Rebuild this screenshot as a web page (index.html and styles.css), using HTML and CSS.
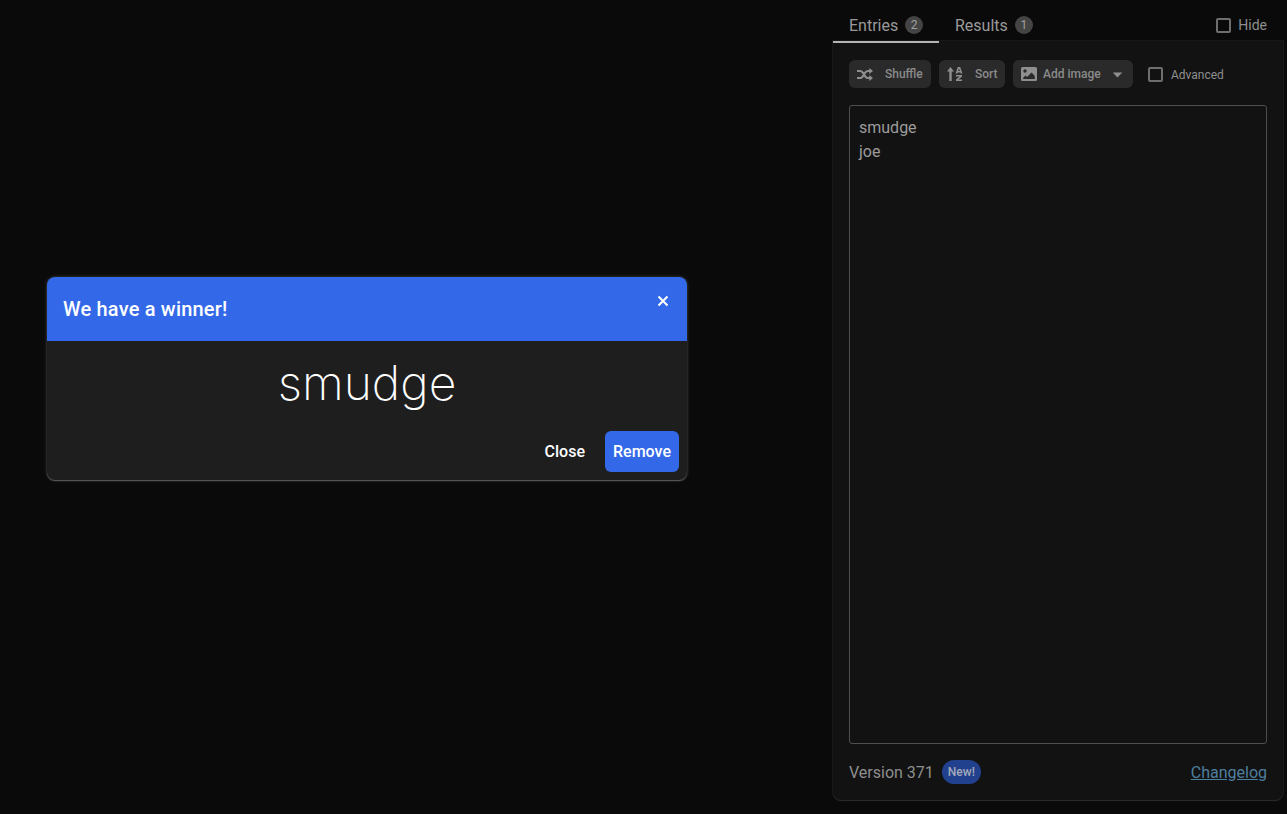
FILE: index.html
```html
<!DOCTYPE html>
<html lang="en">
<head>
<meta charset="utf-8">
<title>Wheel</title>
<link rel="stylesheet" href="styles.css">
</head>
<body>
<div class="page">
  <main class="stage">
    <section class="dialog">
      <header class="dialog-head">
        <h2 class="dialog-title">We have a winner!</h2>
        <svg class="dialog-x" viewBox="0 0 12 12"><path d="M1.5 1.5l9 9M10.5 1.5l-9 9"/></svg>
      </header>
      <div class="winner">smudge</div>
      <footer class="dialog-foot">
        <button class="btn-text">Close</button>
        <button class="btn-primary">Remove</button>
      </footer>
    </section>
  </main>
  <aside class="side">
    <div class="tabs">
      <div class="tab tab-active"><span>Entries</span><span class="count">2</span></div>
      <div class="tab"><span>Results</span><span class="count">1</span></div>
      <label class="hide"><span class="check"></span><span>Hide</span></label>
    </div>
    <div class="panel">
      <div class="toolbar">
        <button class="tool tool-shuffle">
          <svg class="ico-shuffle" viewBox="0 0 16 13"><path class="line" d="M0 3h3c1 0 2 .5 2.6 1.4l2.8 4.2C9 9.5 10 10 11 10h2M0 10h3c1 0 2-.5 2.6-1.4l2.8-4.2C9 3.5 10 3 11 3h2"/><path d="M12.3 0 16 3l-3.700 3zM12.300 7 16 10l-3.700 3z"/></svg>
          <span>Shuffle</span>
        </button>
        <button class="tool tool-sort">
          <svg class="ico-sort" viewBox="0 0 16 14"><path d="M3.500 0 7 4.500H4.700V14H2.300V4.500H0z"/><path fill-rule="evenodd" d="M8.600 6.400 10.800 0h2.400l2.200 6.400h-1.800l-.3-1h-2.600l-.3 1zM11.100 4h1.800L12 1.400zM9 8h6v1.500l-3.600 3H15V14H9v-1.500l3.600-3H9z"/></svg>
          <span>Sort</span>
        </button>
        <button class="tool tool-image">
          <svg class="ico-image" viewBox="0 0 16 14"><path fill-rule="evenodd" d="M1.500 0h13A1.500 1.500 0 0 1 16 1.500v11a1.500 1.500 0 0 1-1.500 1.500h-13A1.500 1.500 0 0 1 0 12.500v-11A1.500 1.500 0 0 1 1.500 0zM4 2.300a1.700 1.700 0 1 0 0 3.400 1.700 1.700 0 0 0 0-3.400zM2.200 12h11.600v-3L10.600 5.400 6 10 4.500 8.500 2.200 10.800z"/></svg>
          <span>Add image</span>
          <svg class="caret" viewBox="0 0 12 7"><path d="M0.500 0.500h11L6 6.500z"/></svg>
        </button>
        <label class="adv"><span class="check"></span><span>Advanced</span></label>
      </div>
      <div class="entries">smudge<br>joe</div>
      <div class="foot">
        <span>Version 371</span>
        <span class="badge">New!</span>
        <a class="log" href="#">Changelog</a>
      </div>
    </div>
  </aside>
</div>
</body>
</html>
```
FILE: styles.css
```css
* { box-sizing: border-box; }
html, body { margin: 0; height: 100%; }
body {
  background: #0a0a0a;
  font-family: Roboto, "Liberation Sans", sans-serif;
  color: #a0a0a0;
  overflow: hidden;
}
.page { display: flex; height: 814px; }
.stage {
  width: 734px;
  flex: none;
  display: flex;
  align-items: center;
  justify-content: center;
  padding-bottom: 57px;
}
.dialog {
  width: 640px;
  height: 203px;
  background: #1e1e1e;
  border-radius: 8px;
  overflow: hidden;
  display: flex;
  flex-direction: column;
  box-shadow: 0 1px 1px #5a5a5a, 0 0 3px 1px rgba(255,255,255,.13);
}
.dialog-head {
  height: 64px;
  flex: none;
  background: #3369e8;
  display: flex;
  align-items: flex-start;
  justify-content: space-between;
  padding: 20px 18px 0 16px;
}
.dialog-title { margin: 0; font-size: 20px; line-height: 24px; font-weight: 500; letter-spacing: .19px; color: #fff; }
.dialog-x { width: 12px; height: 12px; margin-top: -2px; stroke: #fff; stroke-width: 2; fill: none; }
.winner {
  text-align: center;
  font-family: Inter, sans-serif;
  font-weight: 200;
  font-size: 48px;
  line-height: 58px;
  padding-top: 13px;
  height: 90px;
  color: #fff;
}
.dialog-foot { display: flex; justify-content: flex-end; align-items: center; gap: 12px; padding-right: 8px; }
.btn-text, .btn-primary {
  border: 0;
  font: 500 16px/20px Roboto, sans-serif;
  color: #fff;
  border-radius: 6px;
  height: 41px;
}
.btn-text { background: none; padding: 0 8px; }
.btn-primary { background: #3369e8; padding: 0 8px; width: 74px; }
.side { width: 450px; margin-left: 99px; flex: none; display: flex; flex-direction: column; height: 800px; }
.tabs { height: 43px; flex: none; display: flex; padding-top: 12px; position: relative; z-index: 1; }
.tab {
  display: flex;
  align-items: flex-start;
  gap: 7px;
  height: 31px;
  padding: 4px 16px 0;
  font-size: 16px;
  line-height: 20px;
  color: #9a9a9a;
}
.tab-active { border-bottom: 2px solid #b4b4b4; width: 106px; }
.count {
  width: 18px; height: 18px; margin-top: 0;
  border-radius: 9px;
  background: #444;
  color: #a0a0a0;
  font-size: 12px;
  line-height: 18px;
  text-align: center;
}
.hide { margin-left: auto; margin-right: 16px; display: flex; align-items: flex-start; gap: 7px; padding-top: 3px; font-size: 14px; line-height: 20px; color: #8f8f8f; }
.check { width: 15px; height: 15px; border: 2px solid #6e6e6e; border-radius: 2px; flex: none; margin-top: 3px; }
.panel {
  flex: 1;
  min-height: 0;
  background: #121212;
  border-radius: 0 0 8px 8px;
  padding: 17px 16px 0;
  display: flex;
  flex-direction: column;
  margin-top: -2px;
  box-shadow: 0 1px 1px #2c2c2c, 0 0 0 1px #181818;
}
.toolbar { display: flex; align-items: center; gap: 8px; height: 28px; flex: none; margin-top: 2px; }
.tool {
  height: 28px;
  border: 0;
  border-radius: 6px;
  background: #2a2a2a;
  color: #8a8a8a;
  font: 500 12px/16px Roboto, sans-serif;
  display: flex;
  align-items: center;
  padding: 0 8px;
  white-space: nowrap;
}
.tool svg { fill: #8f8f8f; flex: none; }
.ico-shuffle { width: 16px; height: 13px; }
.ico-shuffle .line { fill: none; stroke: #8f8f8f; stroke-width: 2; }
.ico-sort { width: 16px; height: 14px; }
.ico-image { width: 16px; height: 14px; }
.tool-shuffle { width: 82px; gap: 12px; }
.tool-sort { width: 66px; gap: 12px; }
.tool-image { width: 120px; gap: 6px; }
.tool .caret { width: 11px; height: 6px; margin-left: 5px; margin-top: 2px; }
.adv { display: flex; align-items: center; gap: 8px; margin-left: 7px; font-size: 12px; color: #8f8f8f; padding-top: 1px; }
.adv .check { margin-top: -1px; }
.entries {
  margin-top: 17px;
  height: 639px;
  flex: none;
  border: 1px solid #4e4e4e;
  border-radius: 3px;
  padding: 10px 9px;
  font-size: 16px;
  line-height: 24px;
  color: #9c9c9c;
}
.foot { display: flex; align-items: center; height: 57px; font-size: 16px; color: #8f8f8f; }
.badge {
  margin-left: 8px;
  height: 24px;
  width: 39px;
  border-radius: 12px;
  background: #21418f;
  color: #a3a9b8;
  font-size: 12px;
  font-weight: 500;
  line-height: 24px;
  text-align: center;
}
.log { margin-left: auto; color: #4f7f9f; }
```
